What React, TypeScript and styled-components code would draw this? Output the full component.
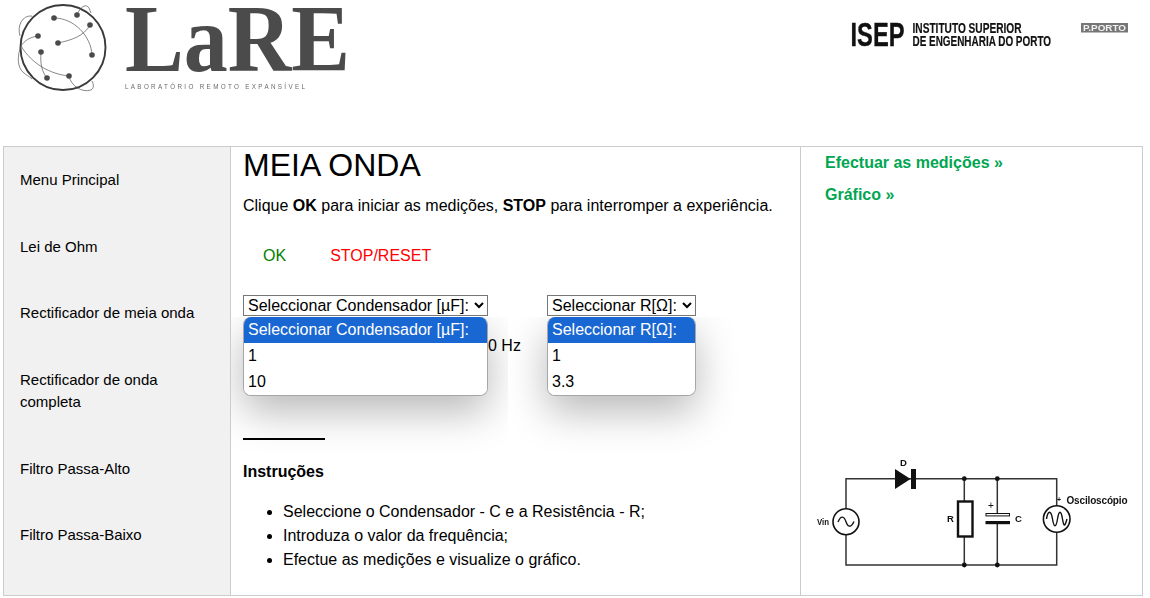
import React from "react";
import styled, { createGlobalStyle } from "styled-components";

const Global = createGlobalStyle`
  html, body { margin: 0; padding: 0; background: #fff; }
  body { font-family: "Liberation Sans", Arial, sans-serif; color: #000; font-size: 16px; }
`;

const Page = styled.div`
  width: 1150px;
  height: 598px;
  overflow: hidden;
`;

const Header = styled.header`
  height: 146px;
  display: flex;
  justify-content: space-between;
  align-items: flex-start;
  padding-right: 10px;
`;

const Logo = styled.svg`
  display: block;
  width: 360px;
  height: 100px;
  filter: blur(0.35px);
`;

const IsepLogo = styled.svg`
  display: block;
  width: 300px;
  height: 40px;
  margin-top: 15px;
  filter: blur(0.25px);
`;

const Shell = styled.div`
  margin-left: 3px;
  width: 1140px;
  height: 450px;
  box-sizing: border-box;
  border: 1px solid #ccc;
  display: grid;
  grid-template-columns: 226px 570px 1fr;
`;

const Sidebar = styled.nav`
  background: #f1f1f1;
  border-right: 1px solid #ccc;
  box-sizing: content-box;
  width: 226px;
`;

const SideItem = styled.a`
  display: block;
  padding: 22px 16px;
  font-size: 15px;
  line-height: 22.5px;
  color: #000;
`;

const Main = styled.main`
  padding-left: 12px;
  margin-left: 1px;
  border-right: 1px solid #ccc;
  width: 557px;
  position: relative;
`;

const Title = styled.h1`
  margin: 0;
  font-size: 32px;
  font-weight: 400;
  line-height: 37px;
`;

const Lead = styled.p`
  margin: 13px 0 0;
  font-size: 16px;
  line-height: 18px;
`;

const Actions = styled.div`
  display: flex;
  gap: 44px;
  margin-top: 32px;
  padding-left: 20px;
  font-size: 16px;
  line-height: 18px;
`;

const Action = styled.a<{ $color: string }>`
  color: ${(p) => p.$color};
`;

const SelectRow = styled.div`
  display: flex;
  gap: 59px;
  margin-top: 30px;
`;

const SelectGroup = styled.div`
  position: relative;
  display: flex;
`;

const NativeSelect = styled.select<{ $width: number }>`
  font-family: "Liberation Sans", Arial, sans-serif;
  font-size: 16px;
  width: ${(p) => p.$width}px;
  height: 21px;
  background: #fff;
  color: #000;
`;

const PopupFrame = styled.div<{ $left: number; $width: number }>`
  position: absolute;
  top: 22px;
  left: ${(p) => p.$left}px;
  width: ${(p) => p.$width}px;
  height: 170px;
  overflow: hidden;
  z-index: 5;
  pointer-events: none;
`;

const Popup = styled.div<{ $offset: number; $width: number }>`
  margin-left: ${(p) => p.$offset}px;
  width: ${(p) => p.$width}px;
  box-sizing: border-box;
  height: 79px;
  background: #fff;
  border: 1px solid #a6a6a6;
  border-top: 0;
  border-radius: 8px;
  overflow: hidden;
  box-shadow: 0 16px 40px rgba(0, 0, 0, 0.28);
`;

const PopupOption = styled.div<{ $active?: boolean }>`
  height: 26px;
  box-sizing: border-box;
  padding-left: 4px;
  font-size: 16px;
  line-height: 25px;
  background: ${(p) => (p.$active ? "#1967d2" : "#fff")};
  color: ${(p) => (p.$active ? "#fff" : "#000")};
  white-space: nowrap;
`;

const FreqRow = styled.div`
  margin-top: 21px;
  padding-left: 245px;
  font-size: 16px;
  line-height: 18px;
`;

const Rule = styled.hr`
  width: 82px;
  height: 2px;
  margin: 83px 0 0;
  border: 0;
  background: #000;
`;

const SubTitle = styled.h3`
  margin: 23px 0 0;
  font-size: 16px;
  line-height: 18px;
  font-weight: 700;
`;

const Steps = styled.ul`
  margin: 19px 0 0;
  padding-left: 40px;
  font-size: 16px;
  line-height: 24px;
`;

const Aside = styled.aside`
  display: flex;
  flex-direction: column;
  padding: 7px 0 0 1px;
`;

const AsideLink = styled.a`
  display: block;
  margin: 0 0 14px 24px;
  font-size: 16px;
  line-height: 18px;
  font-weight: 700;
  color: #00a651;
`;

const Circuit = styled.svg`
  display: block;
  width: 320px;
  height: 120px;
  margin: auto 0 20px 14px;
  filter: blur(0.3px);
`;

const menu = [
  "Menu Principal",
  "Lei de Ohm",
  "Rectificador de meia onda",
  "Rectificador de onda completa",
  "Filtro Passa-Alto",
  "Filtro Passa-Baixo",
];

const steps = [
  "Seleccione o Condensador - C e a Resistência - R;",
  "Introduza o valor da frequência;",
  "Efectue as medições e visualize o gráfico.",
];

const dots: [number, number][] = [
  [54, 18], [77, 15], [90, 25], [38, 36], [58, 43], [41, 52], [92, 55], [47, 78], [69, 76],
];

function LareLogo() {
  return (
    <Logo viewBox="0 0 360 100" role="img" aria-label="LaRE">
      <circle cx="63" cy="47.5" r="42.5" fill="none" stroke="#3a3a3a" strokeWidth="1.9" />
      <g fill="none" stroke="#555" strokeWidth="0.7">
        <path d="M54 18C74 18 91 36 92 55" />
        <path d="M90 25C84 36 72 40 58 43" />
        <path d="M38 36C30 37 24 41 21 46" />
        <path d="M21 46C32 64 50 74 69 76" />
        <path d="M41 52C40 64 42 72 47 78" />
        <path d="M77 15C80 7 86 3 89 8C90 10 90 11 91 13" />
        <path d="M20 36C17 26 22 15 32 16" />
        <path d="M21 46C17 56 17 68 24 73C26 75 29 76 32 79" />
        <path d="M69 76C71 86 82 93 91 90C94 88 94 85 92 81" />
      </g>
      <g fill="#4a4a4a">
        {dots.map(([x, y]) => (
          <circle key={`${x}-${y}`} cx={x} cy={y} r="2.8" />
        ))}
      </g>
      <text
        x="125"
        y="71"
        fontFamily="'Liberation Serif', serif"
        fontWeight="700"
        fontSize="95"
        fill="#4b4b4b"
        textLength="225"
        lengthAdjust="spacingAndGlyphs"
      >
        LaRE
      </text>
      <text
        x="125"
        y="88.5"
        fontFamily="'Liberation Sans', sans-serif"
        fontSize="6.3"
        fill="#6a6a6a"
        textLength="180"
      >
        LABORATÓRIO REMOTO EXPANSÍVEL
      </text>
    </Logo>
  );
}

function Isep() {
  const sans = "'Liberation Sans', sans-serif";
  return (
    <IsepLogo viewBox="840 15 300 40" role="img" aria-label="ISEP">
      <text x="850.5" y="46" fontFamily={sans} fontWeight="700" fontSize="34" fill="#111" stroke="#111" strokeWidth="0.4" textLength="54" lengthAdjust="spacingAndGlyphs">
        ISEP
      </text>
      <text x="912.5" y="32.5" fontFamily={sans} fontWeight="700" fontSize="14.4" fill="#111" stroke="#111" strokeWidth="0.2" textLength="109" lengthAdjust="spacingAndGlyphs">
        INSTITUTO SUPERIOR
      </text>
      <text x="912.5" y="45.7" fontFamily={sans} fontWeight="700" fontSize="14.4" fill="#111" stroke="#111" strokeWidth="0.2" textLength="138.5" lengthAdjust="spacingAndGlyphs">
        DE ENGENHARIA DO PORTO
      </text>
      <rect x="1081" y="23" width="47" height="9.5" fill="#767676" />
      <text x="1083" y="31.2" fontFamily={sans} fontWeight="700" fontSize="8.8" fill="#f2f2f2" textLength="43" lengthAdjust="spacingAndGlyphs">
        P.PORTO
      </text>
    </IsepLogo>
  );
}

function CircuitDiagram() {
  const label = "'Liberation Sans', sans-serif";
  return (
    <Circuit viewBox="815 455 320 120" role="img" aria-label="Circuito">
      <g fill="none" stroke="#333" strokeWidth="1.5">
        <path d="M846 508.5V478.7H1056.7V505.5" />
        <path d="M846 535V565H1056.7V532.5" />
        <path d="M964.3 478.7V501" />
        <path d="M964.3 537V565" />
        <path d="M997.3 478.7V513" />
        <path d="M997.3 524V565" />
      </g>
      <g fill="#fff" stroke="#111" strokeWidth="1.6">
        <circle cx="846" cy="521.7" r="13" />
        <circle cx="1056.7" cy="519" r="13.3" />
      </g>
      <path d="M838 522C841 515 844 516 846 521.7S851 528 854 521.5" fill="none" stroke="#111" strokeWidth="1.4" />
      <path d="M1046.5 519C1048 510 1051 510 1052.5 519S1056 528 1057.5 519S1061 510 1062.5 519S1065 526 1067 519" fill="none" stroke="#111" strokeWidth="1.4" />
      <path d="M895 469L910.5 479L895 489Z" fill="#111" />
      <rect x="911" y="469" width="5" height="20" fill="#111" />
      <g fill="#111">
        <circle cx="964.3" cy="478.7" r="2.4" />
        <circle cx="997.3" cy="478.7" r="2.4" />
        <circle cx="964.3" cy="565" r="2.4" />
        <circle cx="997.3" cy="565" r="2.4" />
      </g>
      <rect x="958" y="501.5" width="14.5" height="35" fill="#fff" stroke="#111" strokeWidth="2.4" />
      <rect x="986" y="513.5" width="23.5" height="2.4" fill="#fff" stroke="#111" strokeWidth="1" />
      <rect x="985.5" y="521" width="24.5" height="3.2" fill="#111" />
      <g fontFamily={label} fontWeight="700" fontSize="9.5" fill="#111">
        <text x="900" y="465.5">D</text>
        <text x="947" y="521.5">R</text>
        <text x="1015" y="521.5">C</text>
        <text x="817" y="525" textLength="12" lengthAdjust="spacingAndGlyphs">Vin</text>
        <text x="1066.5" y="503.5" fontSize="10" textLength="61">Osciloscópio</text>
        <text x="988" y="509" fontWeight="400" fontSize="10">+</text>
        <text x="1057" y="502" fontSize="7">+</text>
      </g>
    </Circuit>
  );
}

export default function App() {
  return (
    <Page>
      <Global />
      <Header>
        <LareLogo />
        <Isep />
      </Header>
      <Shell>
        <Sidebar>
          {menu.map((m) => (
            <SideItem key={m}>{m}</SideItem>
          ))}
        </Sidebar>
        <Main>
          <Title>MEIA ONDA</Title>
          <Lead>
            Clique <b>OK</b> para iniciar as medições, <b>STOP</b> para interromper a experiência.
          </Lead>
          <Actions>
            <Action $color="#008000">OK</Action>
            <Action $color="#ff0000">STOP/RESET</Action>
          </Actions>
          <SelectRow>
            <SelectGroup>
              <NativeSelect $width={245} defaultValue="">
                <option value="">Seleccionar Condensador [µF]:</option>
                <option>1</option>
                <option>10</option>
              </NativeSelect>
              <PopupFrame $left={-12} $width={277}>
                <Popup $offset={12} $width={245}>
                  <PopupOption $active>Seleccionar Condensador [µF]:</PopupOption>
                  <PopupOption>1</PopupOption>
                  <PopupOption>10</PopupOption>
                </Popup>
              </PopupFrame>
            </SelectGroup>
            <SelectGroup>
              <NativeSelect $width={149} defaultValue="">
                <option value="">Seleccionar R[Ω]:</option>
                <option>1</option>
                <option>3.3</option>
              </NativeSelect>
              <PopupFrame $left={-39} $width={250}>
                <Popup $offset={39} $width={149}>
                  <PopupOption $active>Seleccionar R[Ω]:</PopupOption>
                  <PopupOption>1</PopupOption>
                  <PopupOption>3.3</PopupOption>
                </Popup>
              </PopupFrame>
            </SelectGroup>
          </SelectRow>
          <FreqRow>0 Hz</FreqRow>
          <Rule />
          <SubTitle>Instruções</SubTitle>
          <Steps>
            {steps.map((s) => (
              <li key={s}>{s}</li>
            ))}
          </Steps>
        </Main>
        <Aside>
          <AsideLink>Efectuar as medições »</AsideLink>
          <AsideLink>Gráfico »</AsideLink>
          <CircuitDiagram />
        </Aside>
      </Shell>
    </Page>
  );
}
